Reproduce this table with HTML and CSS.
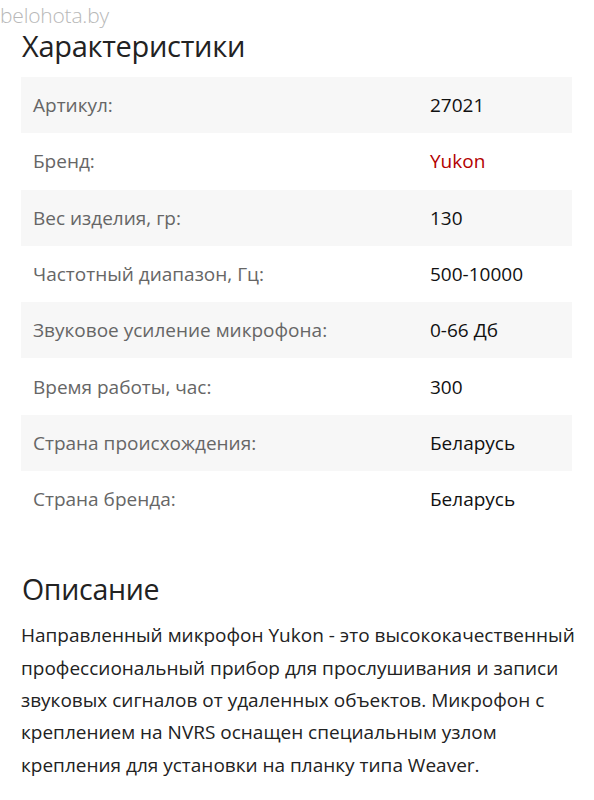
FILE: index.html
```html
<!DOCTYPE html>
<html lang="ru">
<head>
<meta charset="utf-8">
<link rel="stylesheet" href="styles.css">
</head>
<body>
<div class="watermark">belohota.by</div>
<main class="page">
  <h2 class="title">Характеристики</h2>
  <table class="specs">
    <tr><td class="label">Артикул:</td><td class="value">27021</td></tr>
    <tr><td class="label">Бренд:</td><td class="value brand">Yukon</td></tr>
    <tr><td class="label">Вес изделия, гр:</td><td class="value">130</td></tr>
    <tr><td class="label">Частотный диапазон, Гц:</td><td class="value">500-10000</td></tr>
    <tr><td class="label">Звуковое усиление микрофона:</td><td class="value">0-66 Дб</td></tr>
    <tr><td class="label">Время работы, час:</td><td class="value">300</td></tr>
    <tr><td class="label">Страна происхождения:</td><td class="value">Беларусь</td></tr>
    <tr><td class="label">Страна бренда:</td><td class="value">Беларусь</td></tr>
  </table>
  <h2 class="title desc-title">Описание</h2>
  <p class="desc">Направленный микрофон Yukon - это высококачественный профессиональный прибор для прослушивания и записи звуковых сигналов от удаленных объектов. Микрофон с креплением на NVRS оснащен специальным узлом крепления для установки на планку типа Weaver.</p>
</main>
</body>
</html>
```
FILE: styles.css
```css
html, body {
  margin: 0;
  padding: 0;
  background: #fff;
}
body {
  font-family: "Open Sans", "Noto Sans", sans-serif;
  color: #222;
}
.watermark {
  position: absolute;
  left: 0;
  top: 1px;
  font-family: "Open Sans", sans-serif;
  font-size: 21px;
  color: #b8b8b8;
  font-weight: 300;
  letter-spacing: -0.2px;
}
.page {
  padding: 27px 22px 0 21px;
}
.title {
  margin: 0 0 12px 1px;
  font-weight: 400;
  font-size: 29px;
  line-height: 38px;
  color: #222;
  letter-spacing: -0.3px;
}
.specs {
  width: 551px;
  border-collapse: collapse;
  font-size: 19px;
}
.specs tr {
  height: 56.3px;
}
.specs tr:nth-child(odd) {
  background: #f7f7f7;
}
.specs td {
  padding: 0;
  vertical-align: middle;
}
.label {
  padding-left: 12px !important;
  width: 397px;
  color: #666;
}
.value {
  color: #111;
}
.brand {
  color: #b30000;
}
.desc-title {
  margin-top: 43px;
  margin-bottom: 11px;
  font-size: 28.5px;
}
.desc {
  margin: 0;
  font-size: 19px;
  line-height: 32.3px;
  color: #222;
  width: 556px;
}
```
